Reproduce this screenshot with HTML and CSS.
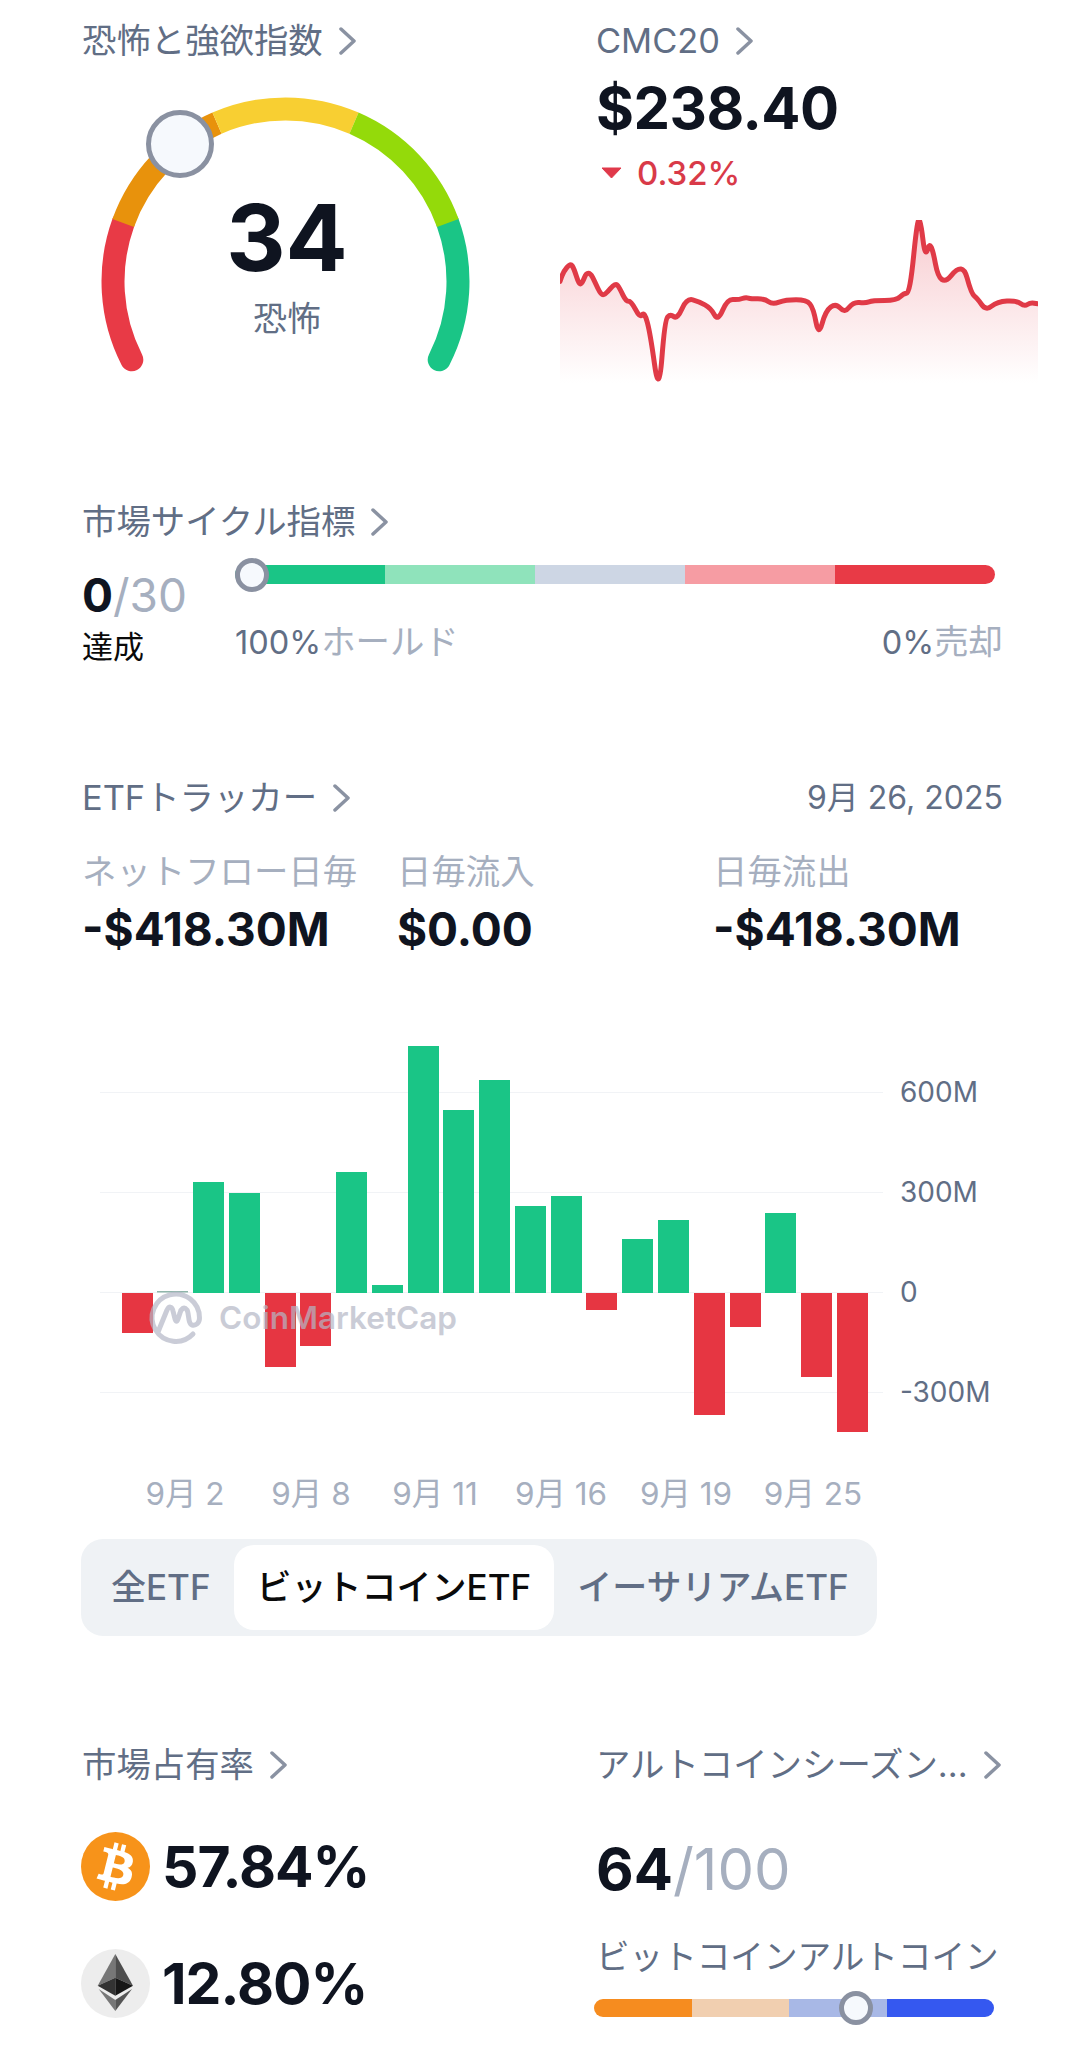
FILE: index.html
```html
<!DOCTYPE html>
<html lang="ja">
<head>
<meta charset="utf-8">
<title>Market overview</title>
<link rel="stylesheet" href="styles.css">
</head>
<body>
<main class="page">
  <section class="top-row">
    <div class="fear-col">
      <h2 class="title">恐怖と強欲指数<svg class="chev" viewBox="0 0 17 28"><path d="M2 2l13 12L2 26"/></svg></h2>
      <svg class="gauge" viewBox="0 0 420 320">
        <g class="arc">
          <path class="round" stroke="#e83a46" d="M49.8 298.7A172.5 172.5 0 0 1 41.2 162"/>
          <path class="round" stroke="#1ac586" d="M357.2 298.7A172.5 172.5 0 0 0 365.8 162"/>
          <path stroke="#e8920c" d="M41.2 162A172.5 172.5 0 0 1 135 62.1"/>
          <path stroke="#f8cf32" d="M135 62.1A172.5 172.5 0 0 1 272 62.1"/>
          <path stroke="#94da0a" d="M272 62.1A172.5 172.5 0 0 1 365.8 162"/>
        </g>
        <circle class="thumb" cx="98" cy="83" r="31.5"/>
        <text class="gauge-num" x="205" y="210">34</text>
        <text class="gauge-label" x="205" y="270">恐怖</text>
      </svg>
    </div>
    <div class="cmc-col">
      <h2 class="title">CMC20<svg class="chev" viewBox="0 0 17 28"><path d="M2 2l13 12L2 26"/></svg></h2>
      <div class="price">$238.40</div>
      <div class="change"><svg class="tri" viewBox="0 0 21 12"><path d="M1 1h19l-9.500 10z"/></svg>0.32%</div>
      <svg class="spark" viewBox="60 660 1377 490" preserveAspectRatio="none">
        <defs>
          <linearGradient id="sparkFill" gradientUnits="userSpaceOnUse" x1="0" y1="670" x2="0" y2="1150">
            <stop offset="0" stop-color="#f8ccd0"/>
            <stop offset="1" stop-color="#ffffff"/>
          </linearGradient>
        </defs>
        <path fill="url(#sparkFill)" d="M60 845L65 830Q70 815 80 802.500Q90 790 95 797.500Q100 805 107.500 830Q115 855 120 851.500Q125 848 130 834Q135 820 141.500 820Q148 820 154 832.500Q160 845 169 865Q178 885 184 885Q190 885 205 866.500Q220 848 226 856.500Q232 865 241 885Q250 905 257.500 904Q265 903 277.500 929Q290 955 296.500 945Q303 935 311.500 967.500Q320 1000 332.500 1095Q345 1190 353.500 1075Q362 960 370 951.500Q378 943 388 950.500Q398 958 411.500 926.500Q425 895 442.500 900Q460 905 477.500 915Q495 925 505 945Q515 965 528.500 931.500Q542 898 558.500 899Q575 900 585 896Q595 892 602.500 894.500Q610 897 630 897Q650 897 661 905.500Q672 914 691 907Q710 900 740 900Q770 900 780 912.500Q790 925 797.500 967.500Q805 1010 815 971.500Q825 933 840 921.500Q855 910 867.500 925Q880 940 892.500 923Q905 906 922.500 908Q940 910 950 906Q960 902 995 902Q1030 902 1040 891Q1050 880 1059 880Q1068 880 1079 765Q1090 650 1095 660Q1100 670 1106 722.500Q1112 775 1120 745Q1128 715 1141.500 791.500Q1155 868 1187.500 826.500Q1220 785 1232.500 833.500Q1245 882 1253.500 888.500Q1262 895 1274.500 914Q1287 933 1303.500 919Q1320 905 1347.500 903.500Q1375 902 1386.500 911Q1398 920 1406.500 914Q1415 908 1426 910Q1437 912 1437 912V1150H60z"/>
        <path class="spark-line" d="M60 845L65 830Q70 815 80 802.500Q90 790 95 797.500Q100 805 107.500 830Q115 855 120 851.500Q125 848 130 834Q135 820 141.500 820Q148 820 154 832.500Q160 845 169 865Q178 885 184 885Q190 885 205 866.500Q220 848 226 856.500Q232 865 241 885Q250 905 257.500 904Q265 903 277.500 929Q290 955 296.500 945Q303 935 311.500 967.500Q320 1000 332.500 1095Q345 1190 353.500 1075Q362 960 370 951.500Q378 943 388 950.500Q398 958 411.500 926.500Q425 895 442.500 900Q460 905 477.500 915Q495 925 505 945Q515 965 528.500 931.500Q542 898 558.500 899Q575 900 585 896Q595 892 602.500 894.500Q610 897 630 897Q650 897 661 905.500Q672 914 691 907Q710 900 740 900Q770 900 780 912.500Q790 925 797.500 967.500Q805 1010 815 971.500Q825 933 840 921.500Q855 910 867.500 925Q880 940 892.500 923Q905 906 922.500 908Q940 910 950 906Q960 902 995 902Q1030 902 1040 891Q1050 880 1059 880Q1068 880 1079 765Q1090 650 1095 660Q1100 670 1106 722.500Q1112 775 1120 745Q1128 715 1141.500 791.500Q1155 868 1187.500 826.500Q1220 785 1232.500 833.500Q1245 882 1253.500 888.500Q1262 895 1274.500 914Q1287 933 1303.500 919Q1320 905 1347.500 903.500Q1375 902 1386.500 911Q1398 920 1406.500 914Q1415 908 1426 910Q1437 912 1437 912"/>
      </svg>
    </div>
  </section>

  <section class="cycle">
    <h2 class="title">市場サイクル指標<svg class="chev" viewBox="0 0 17 28"><path d="M2 2l13 12L2 26"/></svg></h2>
    <div class="cycle-body">
      <div class="cycle-score">
        <div class="fraction small"><b>0</b><span>/30</span></div>
        <div class="achieved">達成</div>
      </div>
      <div class="cycle-meter">
        <div class="track cycle-track">
          <i class="seg c1"></i><i class="seg c2"></i><i class="seg c3"></i><i class="seg c4"></i><i class="seg c5"></i>
          <span class="knob knob-start"></span>
        </div>
        <div class="cycle-legend">
          <span><em>100%</em>ホールド</span>
          <span><em>0%</em>売却</span>
        </div>
      </div>
    </div>
  </section>

  <section class="etf">
    <div class="etf-head">
      <h2 class="title">ETFトラッカー<svg class="chev" viewBox="0 0 17 28"><path d="M2 2l13 12L2 26"/></svg></h2>
      <span class="date">9月 26, 2025</span>
    </div>
    <div class="stats">
      <div><div class="stat-label">ネットフロー日毎</div><div class="stat-value">-$418.30M</div></div>
      <div><div class="stat-label">日毎流入</div><div class="stat-value">$0.00</div></div>
      <div><div class="stat-label">日毎流出</div><div class="stat-value">-$418.30M</div></div>
    </div>
    <svg class="chart" viewBox="82 1030 921 490">
      <g class="grid">
        <path d="M100 1092.500H883M100 1192.500H883M100 1292.500H883M100 1392.500H883"/>
      </g>
      <g class="bars-up">
        <rect class="bar-tiny" x="157" y="1291" width="31" height="1.500"/>
        <rect x="193" y="1182" width="31" height="111"/>
        <rect x="229" y="1193" width="31" height="100"/>
        <rect x="336" y="1172" width="31" height="121"/>
        <rect x="372" y="1285" width="31" height="8"/>
        <rect x="408" y="1046" width="31" height="247"/>
        <rect x="443" y="1110" width="31" height="183"/>
        <rect x="479" y="1080" width="31" height="213"/>
        <rect x="515" y="1206" width="31" height="87"/>
        <rect x="551" y="1196" width="31" height="97"/>
        <rect x="622" y="1239" width="31" height="54"/>
        <rect x="658" y="1220" width="31" height="73"/>
        <rect x="765" y="1213" width="31" height="80"/>
      </g>
      <g class="bars-down">
        <rect x="122" y="1293" width="31" height="40"/>
        <rect x="265" y="1293" width="31" height="74"/>
        <rect x="300" y="1293" width="31" height="53"/>
        <rect x="586" y="1293" width="31" height="17"/>
        <rect x="694" y="1293" width="31" height="122"/>
        <rect x="730" y="1293" width="31" height="34"/>
        <rect x="801" y="1293" width="31" height="84"/>
        <rect x="837" y="1293" width="31" height="139"/>
      </g>
      <g class="mark">
        <path class="mark-ring" d="M193 1334A23.700 23.700 0 1 1 199.500 1318C199.500 1323 196 1326 192 1325C188 1324 189 1313 187 1310C184 1306 181 1309 180 1313L178 1319C177 1322 176 1322 175 1319L173 1311C172 1306 169 1306 167 1310L158 1332"/>
        <text class="mark-text" x="219" y="1329">CoinMarketCap</text>
      </g>
      <g class="y-labels">
        <text x="900" y="1102">600M</text>
        <text x="900" y="1202">300M</text>
        <text x="900" y="1302">0</text>
        <text x="900" y="1402">-300M</text>
      </g>
      <g class="x-labels">
        <text x="185" y="1505">9月 2</text>
        <text x="311" y="1505">9月 8</text>
        <text x="435" y="1505">9月 11</text>
        <text x="561" y="1505">9月 16</text>
        <text x="686" y="1505">9月 19</text>
        <text x="813" y="1505">9月 25</text>
      </g>
    </svg>
    <div class="tabs">
      <span class="tab">全ETF</span>
      <span class="tab active">ビットコインETF</span>
      <span class="tab">イーサリアムETF</span>
    </div>
  </section>

  <section class="bottom-row">
    <div class="share-col">
      <h2 class="title">市場占有率<svg class="chev" viewBox="0 0 17 28"><path d="M2 2l13 12L2 26"/></svg></h2>
      <div class="coin">
        <svg class="coin-icon" viewBox="0 0 32 32"><circle cx="16" cy="16" r="16" fill="#f7931a"/><path fill="#fff" transform="translate(16 16) scale(1.12) translate(-16 -16)" d="M23.189 14.02c.314-2.096-1.283-3.223-3.465-3.975l.708-2.84-1.728-.43-.69 2.765c-.454-.114-.92-.22-1.385-.326l.695-2.783L15.596 6l-.708 2.839c-.376-.086-.746-.17-1.104-.26l.002-.009-2.384-.595-.46 1.846s1.283.294 1.256.312c.7.175.826.638.805 1.006l-.806 3.235c.048.012.11.03.18.057l-.183-.045-1.13 4.532c-.086.212-.303.531-.793.41.018.025-1.256-.313-1.256-.313l-.858 1.978 2.25.561c.418.105.828.215 1.231.318l-.715 2.872 1.727.43.708-2.84c.472.127.93.245 1.378.357l-.706 2.828 1.728.43.715-2.866c2.948.558 5.164.333 6.097-2.333.752-2.146-.037-3.385-1.588-4.192 1.13-.26 1.98-1.003 2.207-2.538zm-3.95 5.538c-.533 2.147-4.148.986-5.32.695l.95-3.805c1.172.293 4.929.872 4.37 3.11zm.535-5.569c-.487 1.953-3.495.96-4.47.717l.86-3.45c.975.243 4.118.696 3.61 2.733z"/></svg>
        <span class="coin-value">57.84%</span>
      </div>
      <div class="coin coin-eth">
        <svg class="coin-icon" viewBox="0 0 69 69"><circle cx="34.500" cy="34.500" r="34.500" fill="#ededed"/><path fill="#777" d="M34.300 5L16.700 36.700l17.600-8z"/><path fill="#4e4e4e" d="M34.300 5L52 36.700l-17.700-8z"/><path fill="#333" d="M16.700 36.700l17.600-8v18z"/><path fill="#161616" d="M52 36.700l-17.700-8v18z"/><path fill="#777" d="M17.700 40l16.600 11v11z"/><path fill="#555" d="M51 40L34.300 51v11z"/></svg>
        <span class="coin-value">12.80%</span>
      </div>
    </div>
    <div class="alt-col">
      <h2 class="title alt-title"><span>アルトコインシーズン...</span><svg class="chev" viewBox="0 0 17 28"><path d="M2 2l13 12L2 26"/></svg></h2>
      <div class="fraction large"><b>64</b><span>/100</span></div>
      <div class="alt-label">ビットコインアルトコイン</div>
      <div class="track alt-track">
        <i class="seg a1"></i><i class="seg a2"></i><i class="seg a3"></i><i class="seg a4"></i>
        <span class="knob knob-alt"></span>
      </div>
    </div>
  </section>
</main>
</body>
</html>
```

FILE: styles.css
```css
* { box-sizing: border-box; }
html, body { margin: 0; padding: 0; background: #fff; }
body {
  font-family: Inter, "Noto Sans CJK JP", sans-serif;
  color: #0f1420;
  width: 1084px;
  height: 2048px;
  overflow: hidden;
}
.page { padding: 21px 81px 0 82px; }

.title {
  margin: 0;
  display: flex;
  align-items: center;
  height: 40px;
  line-height: 40px;
  font-size: 34.400px;
  font-weight: 400;
  color: #616e85;
  white-space: nowrap;
}
.chev { width: 17px; height: 28px; margin-left: 16px; flex: none; }
.chev path { fill: none; stroke: #8a92a2; stroke-width: 3.500; stroke-linecap: round; stroke-linejoin: round; }

.top-row { display: flex; height: 378px; }
.fear-col { width: 514px; flex: none; }
.gauge { display: block; width: 420px; height: 320px; }
.arc path { fill: none; stroke-width: 23; }
.arc .round { stroke-linecap: round; }
.thumb { fill: #f6f9fd; stroke: #8a91a1; stroke-width: 5; }
.gauge-num { font-size: 92px; font-weight: 700; text-anchor: middle; fill: #0f1420; }
.gauge-label { font-size: 34px; text-anchor: middle; fill: #616e85; }

.cmc-col { flex: 1; min-width: 0; }
.price { font-size: 58px; letter-spacing: -0.5px; font-weight: 700; line-height: 60px; margin-top: 17px; }
.change { display: flex; align-items: center; height: 40px; margin-top: 15px; font-size: 33px; font-weight: 500; color: #d93a48; }
.tri { width: 21px; height: 12px; margin: 0 15px 0 5px; }
.tri path { fill: #e0394a; stroke: #e0394a; stroke-width: 1; stroke-linejoin: round; }
.spark { display: block; width: 478px; height: 163px; margin: 27px 0 0 -36px; }
.spark-line { fill: none; stroke: #e03a47; stroke-width: 5px; stroke-linejoin: round; stroke-linecap: round; vector-effect: non-scaling-stroke; }

.cycle { margin-top: 103px; }
.cycle-body { display: flex; margin-top: 16px; }
.cycle-score { width: 153px; flex: none; }
.fraction b { font-weight: 700; color: #0f1420; }
.fraction span { font-weight: 400; color: #a6afbf; }
.fraction.small { font-size: 46px; line-height: 50px; margin-top: 12px; }
.achieved { font-size: 31px; line-height: 40px; margin-top: 7px; color: #0a0a0a; }
.cycle-meter { width: 768px; }
.track { position: relative; display: flex; }
.seg { display: block; height: 100%; flex: none; }
.cycle-track { width: 760px; height: 19px; margin-top: 7px; border-radius: 10px; }
.c1 { width: 150px; background: #1ac586; border-radius: 10px 0 0 10px; }
.c2 { width: 150px; background: #8fe3bb; }
.c3 { width: 150px; background: #cdd6e4; }
.c4 { width: 150px; background: #f69ca3; }
.c5 { flex: 1; background: #e83a46; border-radius: 0 10px 10px 0; }
.knob {
  position: absolute;
  width: 34px;
  height: 34px;
  border-radius: 50%;
  background: #f6f9fd;
  border: 5px solid #8a91a1;
  top: 50%;
  transform: translate(-50%, -50%);
}
.knob-start { left: 17px; }
.knob-alt { left: 262px; }
.cycle-legend { display: flex; justify-content: space-between; margin-top: 38px; font-size: 34.400px; line-height: 40px; color: #a6afbf; }
.cycle-legend em { font-style: normal; font-size: 32.500px; color: #616e85; }

.etf { margin-top: 111px; }
.etf-head { display: flex; justify-content: space-between; align-items: center; }
.date { font-size: 32px; line-height: 40px; color: #616e85; }
.stats { display: grid; grid-template-columns: 315px 316px 1fr; margin-top: 34px; }
.stat-label { font-size: 34.400px; line-height: 40px; color: #a6afbf; }
.stat-value { font-size: 46px; font-weight: 700; line-height: 50px; margin-top: 12px; }
.chart { display: block; width: 921px; height: 490px; margin-top: 76px; }
.grid path { fill: none; stroke: #f1f3f6; stroke-width: 1; }
.bars-up rect { fill: #1ac586; }
.bars-up .bar-tiny { fill: #8fb5aa; }
.bars-down rect { fill: #e63642; }
.mark-ring { fill: none; stroke: #b4b7c6; stroke-width: 5; stroke-linecap: round; stroke-linejoin: round; opacity: .7; }
.mark-text { font-size: 31.500px; font-weight: 600; fill: #b4b7c6; opacity: .7; }
.y-labels text { font-size: 28px; fill: #616e85; }
.x-labels text { font-size: 31.500px; fill: #a6afbf; text-anchor: middle; }

.tabs {
  display: flex;
  align-items: center;
  width: 796px;
  height: 97px;
  margin: 19px 0 0 -1px;
  padding: 0 7px;
  border-radius: 22px;
  background: #eff2f5;
}
.tab { font-size: 35px; font-weight: 500; color: #616e85; line-height: 85px; height: 85px; padding: 0 23px; white-space: nowrap; }
.tab.active { background: #fff; color: #0a0a0a; border-radius: 20px; }

.bottom-row { display: flex; margin-top: 109px; }
.share-col { width: 514px; flex: none; }
.coin { display: flex; align-items: center; margin-top: 47px; margin-left: -1px; }
.coin-eth { margin-top: 48px; }
.coin-icon { width: 69px; height: 69px; flex: none; }
.coin-value { font-size: 57px; letter-spacing: -1px; font-weight: 700; line-height: 68px; margin-left: 12px; }
.alt-col { flex: 1; min-width: 0; }
.alt-title span { width: 372px; }
.fraction.large { font-size: 58px; line-height: 68px; margin-top: 50px; }
.alt-label { font-size: 33.600px; line-height: 40px; color: #616e85; margin-top: 34px; white-space: nowrap; }
.alt-track { width: 400px; height: 18px; margin: 22px 0 0 -2px; }
.a1 { width: 97.500px; background: #f68c1f; border-radius: 9px 0 0 9px; }
.a2 { width: 97.500px; background: #f1cfb0; }
.a3 { width: 97.500px; background: #a8b8e6; }
.a4 { flex: 1; background: #3558f0; border-radius: 0 9px 9px 0; }
```
